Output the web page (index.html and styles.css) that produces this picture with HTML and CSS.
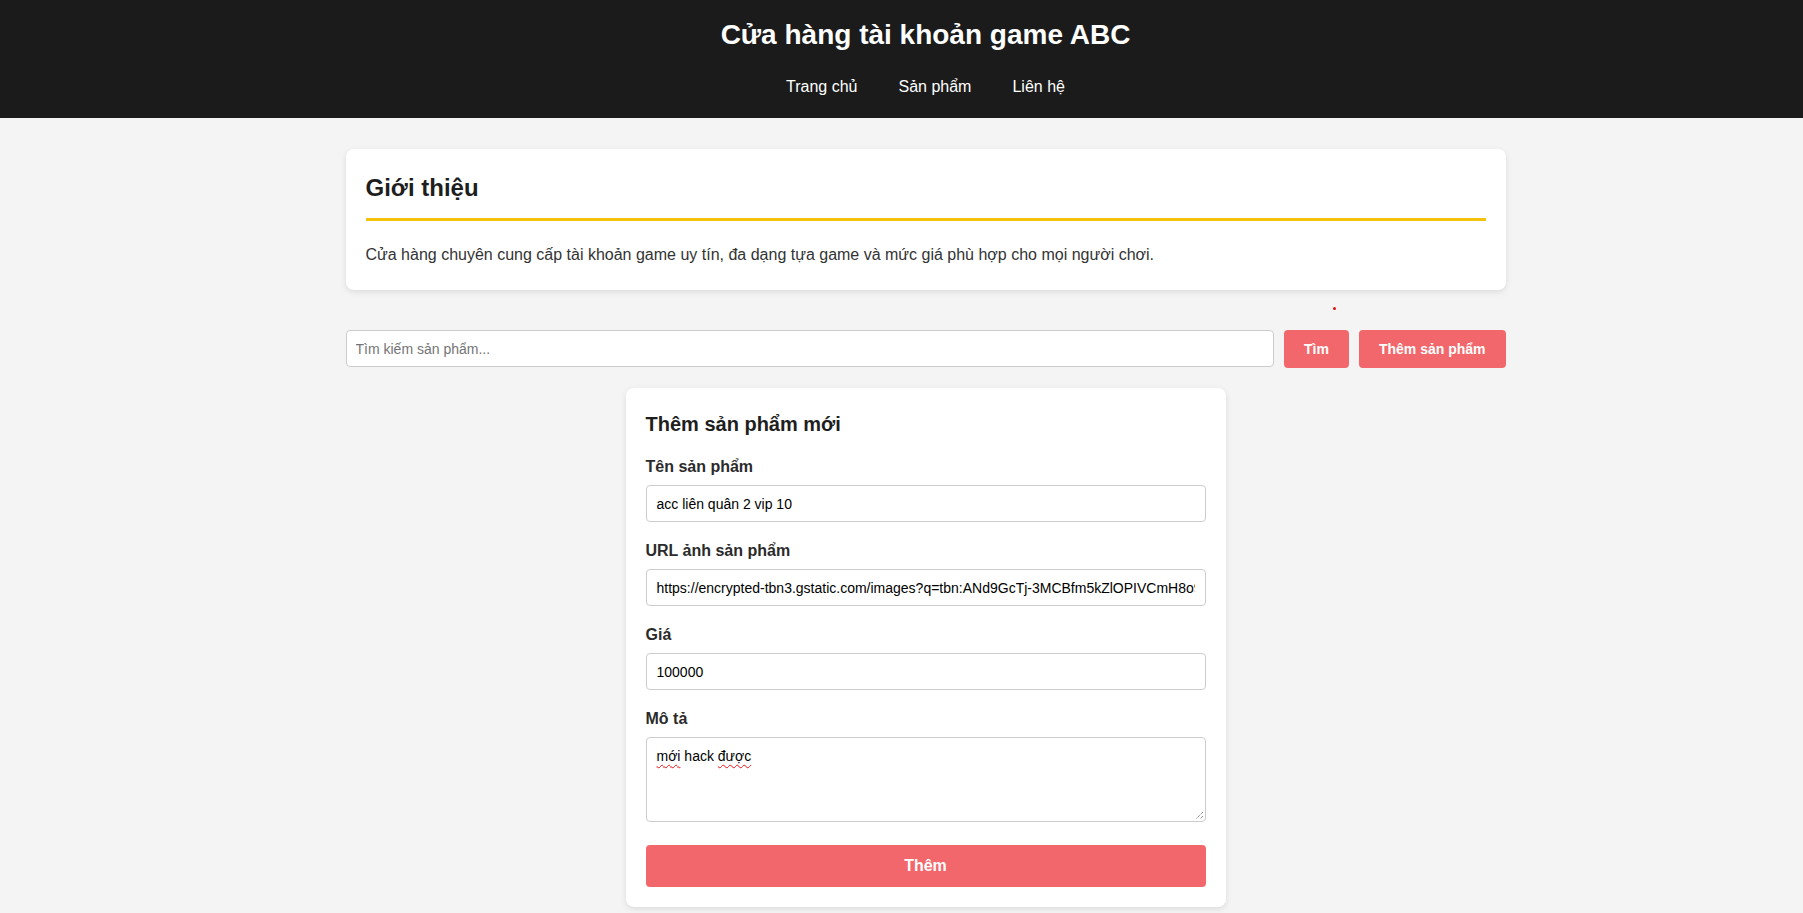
FILE: index.html
```html
<!DOCTYPE html>
<html lang="vi">
<head>
<meta charset="utf-8">
<title>Cửa hàng tài khoản game ABC</title>
<link rel="stylesheet" href="styles.css">
</head>
<body>
<div class="page">
  <header class="site-header">
    <h1 class="site-title">Cửa hàng tài khoản game ABC</h1>
    <nav class="site-nav">
      <a href="#">Trang chủ</a>
      <a href="#">Sản phẩm</a>
      <a href="#">Liên hệ</a>
    </nav>
  </header>

  <main class="container">
    <section class="card intro">
      <h2 class="intro-title">Giới thiệu</h2>
      <p class="intro-text">Cửa hàng chuyên cung cấp tài khoản game uy tín, đa dạng tựa game và mức giá phù hợp cho mọi người chơi.</p>
    </section>

    <div class="search-row">
      <span class="red-dot"></span>
      <input class="search-input" type="text" placeholder="Tìm kiếm sản phẩm...">
      <button class="btn btn-small">Tìm</button>
      <button class="btn btn-small">Thêm sản phẩm</button>
    </div>

    <section class="card form-card">
      <h3 class="form-title">Thêm sản phẩm mới</h3>
      <div class="field first">
        <label class="field-label">Tên sản phẩm</label>
        <input class="field-input" type="text" value="acc liên quân 2 vip 10">
      </div>
      <div class="field">
        <label class="field-label">URL ảnh sản phẩm</label>
        <input class="field-input" type="text" value="https://encrypted-tbn3.gstatic.com/images?q=tbn:ANd9GcTj-3MCBfm5kZlOPIVCmH8o9Ew">
      </div>
      <div class="field">
        <label class="field-label">Giá</label>
        <input class="field-input" type="text" value="100000">
      </div>
      <div class="field">
        <label class="field-label">Mô tả</label>
        <div class="field-textarea" role="textbox" aria-multiline="true"><span class="misspelled">mới</span> hack <span class="misspelled">được</span>
          <svg class="grip" width="9" height="9" viewBox="0 0 9 9"><path d="M8 1 L1 8 M8 5 L5 8" stroke="#555" stroke-width="1" stroke-dasharray="1 1" fill="none"/></svg>
        </div>
      </div>
      <button class="btn btn-submit">Thêm</button>
    </section>
  </main>
</div>
</body>
</html>
```
FILE: styles.css
```css
html, body {
  margin: 0;
  padding: 0;
  overflow: hidden;
  height: 913px;
}
body {
  background: #f4f4f4;
  font-family: "Liberation Sans", Arial, sans-serif;
  color: #333;
}
.page {
  width: 1851px;
}
.site-header {
  background: #1b1b1b;
  padding: 19px 0 22px;
  text-align: center;
}
.site-title {
  margin: 0;
  font-size: 28px;
  line-height: 32px;
  font-weight: bold;
  color: #fff;
}
.site-nav {
  margin-top: 27px;
  display: flex;
  justify-content: center;
  gap: 41px;
  line-height: 18px;
}
.site-nav a {
  color: #fff;
  text-decoration: none;
  font-size: 16px;
}
.container {
  width: 1160px;
  margin: 31px auto 0;
}
.card {
  background: #fff;
  border-radius: 8px;
  box-shadow: 0 2px 6px rgba(0, 0, 0, 0.1);
}
.intro {
  padding: 20px 20px 23px;
}
.intro-title {
  margin: 5px 0 0;
  font-size: 24px;
  line-height: 28px;
  color: #1e1e1e;
  padding-bottom: 16px;
  border-bottom: 3px solid #f4c20d;
}
.intro-text {
  margin: 22px 0 0;
  font-size: 16px;
  line-height: 24px;
  color: #333;
}
.search-row {
  position: relative;
  margin-top: 40px;
  display: flex;
  align-items: flex-start;
  gap: 10px;
}
.red-dot {
  position: absolute;
  left: 987px;
  top: -23px;
  width: 3px;
  height: 3px;
  border-radius: 50%;
  background: #e01010;
}
.search-input {
  flex: 1;
  box-sizing: border-box;
  height: 37px;
  margin: 0;
  padding: 0 9px;
  border: 1px solid #ccc;
  border-radius: 4px;
  font-family: "Liberation Sans", Arial, sans-serif;
  font-size: 14px;
  color: #222;
  background: #fff;
  outline: none;
}
.search-input::placeholder {
  color: #757575;
}
.btn {
  box-sizing: border-box;
  border: none;
  border-radius: 4px;
  background: #f2676b;
  color: #fff;
  font-family: "Liberation Sans", Arial, sans-serif;
  font-weight: bold;
  cursor: pointer;
  margin: 0;
}
.btn-small {
  height: 38px;
  padding: 0 20px;
  font-size: 14px;
}
.form-card {
  width: 600px;
  box-sizing: border-box;
  margin: 20px auto 0;
  padding: 20px;
}
.form-title {
  margin: 5px 0 0;
  font-size: 20px;
  line-height: 23px;
  color: #1e1e1e;
}
.field {
  margin-bottom: 20px;
}
.field.first {
  margin-top: 22px;
}
.field-label {
  display: block;
  font-weight: bold;
  font-size: 16px;
  line-height: 18px;
  margin-bottom: 9px;
  color: #2b2b2b;
}
.field-input {
  display: block;
  width: 100%;
  box-sizing: border-box;
  height: 37px;
  margin: 0;
  padding: 0 10px;
  border: 1px solid #ccc;
  border-radius: 4px;
  font-family: "Liberation Sans", Arial, sans-serif;
  font-size: 14px;
  color: #000;
  background: #fff;
  outline: none;
}
.field-textarea {
  position: relative;
  box-sizing: border-box;
  height: 85px;
  padding: 10px;
  border: 1px solid #ccc;
  border-radius: 4px;
  font-size: 14px;
  line-height: 16px;
  color: #000;
  background: #fff;
}
.misspelled {
  text-decoration: underline wavy #e8141c;
  text-decoration-thickness: 1px;
  text-underline-offset: 3px;
}
.grip {
  position: absolute;
  right: 1px;
  bottom: 1px;
}
.btn-submit {
  display: block;
  width: 100%;
  height: 42px;
  margin-top: 23px;
  font-size: 16px;
}
```
